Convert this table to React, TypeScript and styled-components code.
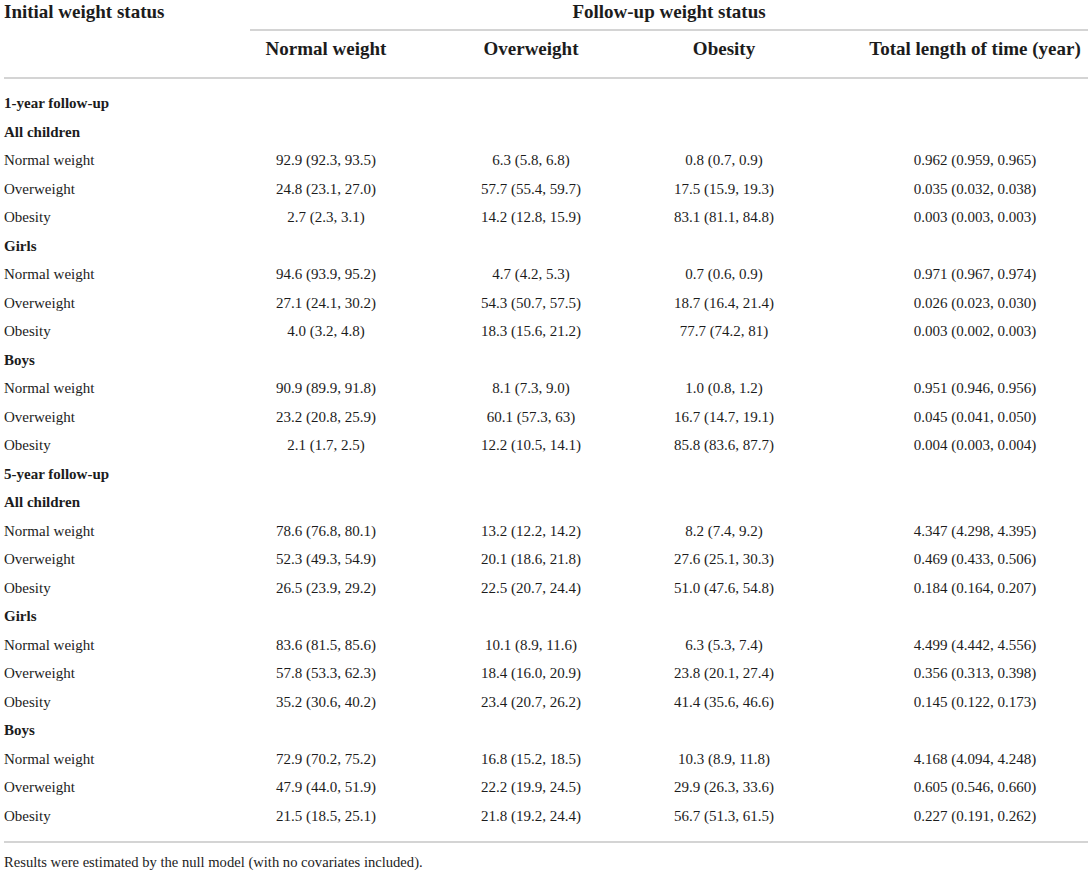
import React from "react";
import styled, { createGlobalStyle } from "styled-components";

const GlobalStyle = createGlobalStyle`
  html, body {
    margin: 0;
    padding: 0;
    background: #ffffff;
  }
  body {
    font-family: "Liberation Serif", "Times New Roman", serif;
    color: #1c1c1c;
  }
`;

const COLS = "246px 152px 258px 128px 1fr";
const RULE = "2px solid #d4d4d4";

const Page = styled.div`
  width: 1091px;
  box-sizing: border-box;
  padding: 0 3px 0 4px;
`;

const Head = styled.div`
  display: grid;
  grid-template-columns: ${COLS};
  grid-template-rows: 29px 2px 46px;
  border-bottom: ${RULE};
  font-size: 19px;
  font-weight: 700;
  line-height: 24px;
`;

const StubHead = styled.div`
  grid-column: 1;
  grid-row: 1 / 4;
  align-self: start;
`;

const SpanHead = styled.div`
  grid-column: 2 / 6;
  grid-row: 1;
  text-align: center;
  align-self: start;
`;

const SpanRule = styled.div`
  grid-column: 2 / 6;
  grid-row: 2;
  border-top: ${RULE};
`;

const ColHead = styled.div<{ $last?: boolean }>`
  grid-row: 3;
  text-align: center;
  padding-top: 6px;
  padding-left: ${(p) => (p.$last ? "74px" : "0")};
  white-space: nowrap;
`;

const Body = styled.div`
  padding: 10px 0 11px;
  border-bottom: ${RULE};
`;

const Row = styled.div`
  display: grid;
  grid-template-columns: ${COLS};
  height: 28.5px;
  line-height: 28.5px;
  font-size: 15px;
`;

const Label = styled.div<{ $bold?: boolean }>`
  font-weight: ${(p) => (p.$bold ? 700 : 400)};
  white-space: nowrap;
`;

const Cell = styled.div<{ $last?: boolean }>`
  text-align: center;
  white-space: nowrap;
  padding-left: ${(p) => (p.$last ? "74px" : "0")};
`;

const Footnote = styled.p`
  margin: 9px 0 0;
  font-size: 14.6px;
  line-height: 20px;
`;

type DataRow = [string, string, string, string, string];

type Group = { name: string; rows: DataRow[] };
type Section = { title: string; groups: Group[] };

const sections: Section[] = [
  {
    title: "1-year follow-up",
    groups: [
      {
        name: "All children",
        rows: [
          ["Normal weight", "92.9 (92.3, 93.5)", "6.3 (5.8, 6.8)", "0.8 (0.7, 0.9)", "0.962 (0.959, 0.965)"],
          ["Overweight", "24.8 (23.1, 27.0)", "57.7 (55.4, 59.7)", "17.5 (15.9, 19.3)", "0.035 (0.032, 0.038)"],
          ["Obesity", "2.7 (2.3, 3.1)", "14.2 (12.8, 15.9)", "83.1 (81.1, 84.8)", "0.003 (0.003, 0.003)"],
        ],
      },
      {
        name: "Girls",
        rows: [
          ["Normal weight", "94.6 (93.9, 95.2)", "4.7 (4.2, 5.3)", "0.7 (0.6, 0.9)", "0.971 (0.967, 0.974)"],
          ["Overweight", "27.1 (24.1, 30.2)", "54.3 (50.7, 57.5)", "18.7 (16.4, 21.4)", "0.026 (0.023, 0.030)"],
          ["Obesity", "4.0 (3.2, 4.8)", "18.3 (15.6, 21.2)", "77.7 (74.2, 81)", "0.003 (0.002, 0.003)"],
        ],
      },
      {
        name: "Boys",
        rows: [
          ["Normal weight", "90.9 (89.9, 91.8)", "8.1 (7.3, 9.0)", "1.0 (0.8, 1.2)", "0.951 (0.946, 0.956)"],
          ["Overweight", "23.2 (20.8, 25.9)", "60.1 (57.3, 63)", "16.7 (14.7, 19.1)", "0.045 (0.041, 0.050)"],
          ["Obesity", "2.1 (1.7, 2.5)", "12.2 (10.5, 14.1)", "85.8 (83.6, 87.7)", "0.004 (0.003, 0.004)"],
        ],
      },
    ],
  },
  {
    title: "5-year follow-up",
    groups: [
      {
        name: "All children",
        rows: [
          ["Normal weight", "78.6 (76.8, 80.1)", "13.2 (12.2, 14.2)", "8.2 (7.4, 9.2)", "4.347 (4.298, 4.395)"],
          ["Overweight", "52.3 (49.3, 54.9)", "20.1 (18.6, 21.8)", "27.6 (25.1, 30.3)", "0.469 (0.433, 0.506)"],
          ["Obesity", "26.5 (23.9, 29.2)", "22.5 (20.7, 24.4)", "51.0 (47.6, 54.8)", "0.184 (0.164, 0.207)"],
        ],
      },
      {
        name: "Girls",
        rows: [
          ["Normal weight", "83.6 (81.5, 85.6)", "10.1 (8.9, 11.6)", "6.3 (5.3, 7.4)", "4.499 (4.442, 4.556)"],
          ["Overweight", "57.8 (53.3, 62.3)", "18.4 (16.0, 20.9)", "23.8 (20.1, 27.4)", "0.356 (0.313, 0.398)"],
          ["Obesity", "35.2 (30.6, 40.2)", "23.4 (20.7, 26.2)", "41.4 (35.6, 46.6)", "0.145 (0.122, 0.173)"],
        ],
      },
      {
        name: "Boys",
        rows: [
          ["Normal weight", "72.9 (70.2, 75.2)", "16.8 (15.2, 18.5)", "10.3 (8.9, 11.8)", "4.168 (4.094, 4.248)"],
          ["Overweight", "47.9 (44.0, 51.9)", "22.2 (19.9, 24.5)", "29.9 (26.3, 33.6)", "0.605 (0.546, 0.660)"],
          ["Obesity", "21.5 (18.5, 25.1)", "21.8 (19.2, 24.4)", "56.7 (51.3, 61.5)", "0.227 (0.191, 0.262)"],
        ],
      },
    ],
  },
];

const headers = ["Normal weight", "Overweight", "Obesity", "Total length of time (year)"];

export default function App() {
  return (
    <Page>
      <GlobalStyle />
      <Head>
        <StubHead>Initial weight status</StubHead>
        <SpanHead>Follow-up weight status</SpanHead>
        <SpanRule />
        {headers.map((h, i) => (
          <ColHead key={h} $last={i === headers.length - 1}>
            {h}
          </ColHead>
        ))}
      </Head>
      <Body>
        {sections.map((s) => (
          <React.Fragment key={s.title}>
            <Row>
              <Label $bold>{s.title}</Label>
            </Row>
            {s.groups.map((g) => (
              <React.Fragment key={s.title + g.name}>
                <Row>
                  <Label $bold>{g.name}</Label>
                </Row>
                {g.rows.map((r) => (
                  <Row key={s.title + g.name + r[0]}>
                    <Label>{r[0]}</Label>
                    {r.slice(1).map((v, i) => (
                      <Cell key={i} $last={i === 3}>
                        {v}
                      </Cell>
                    ))}
                  </Row>
                ))}
              </React.Fragment>
            ))}
          </React.Fragment>
        ))}
      </Body>
      <Footnote>Results were estimated by the null model (with no covariates included).</Footnote>
    </Page>
  );
}
